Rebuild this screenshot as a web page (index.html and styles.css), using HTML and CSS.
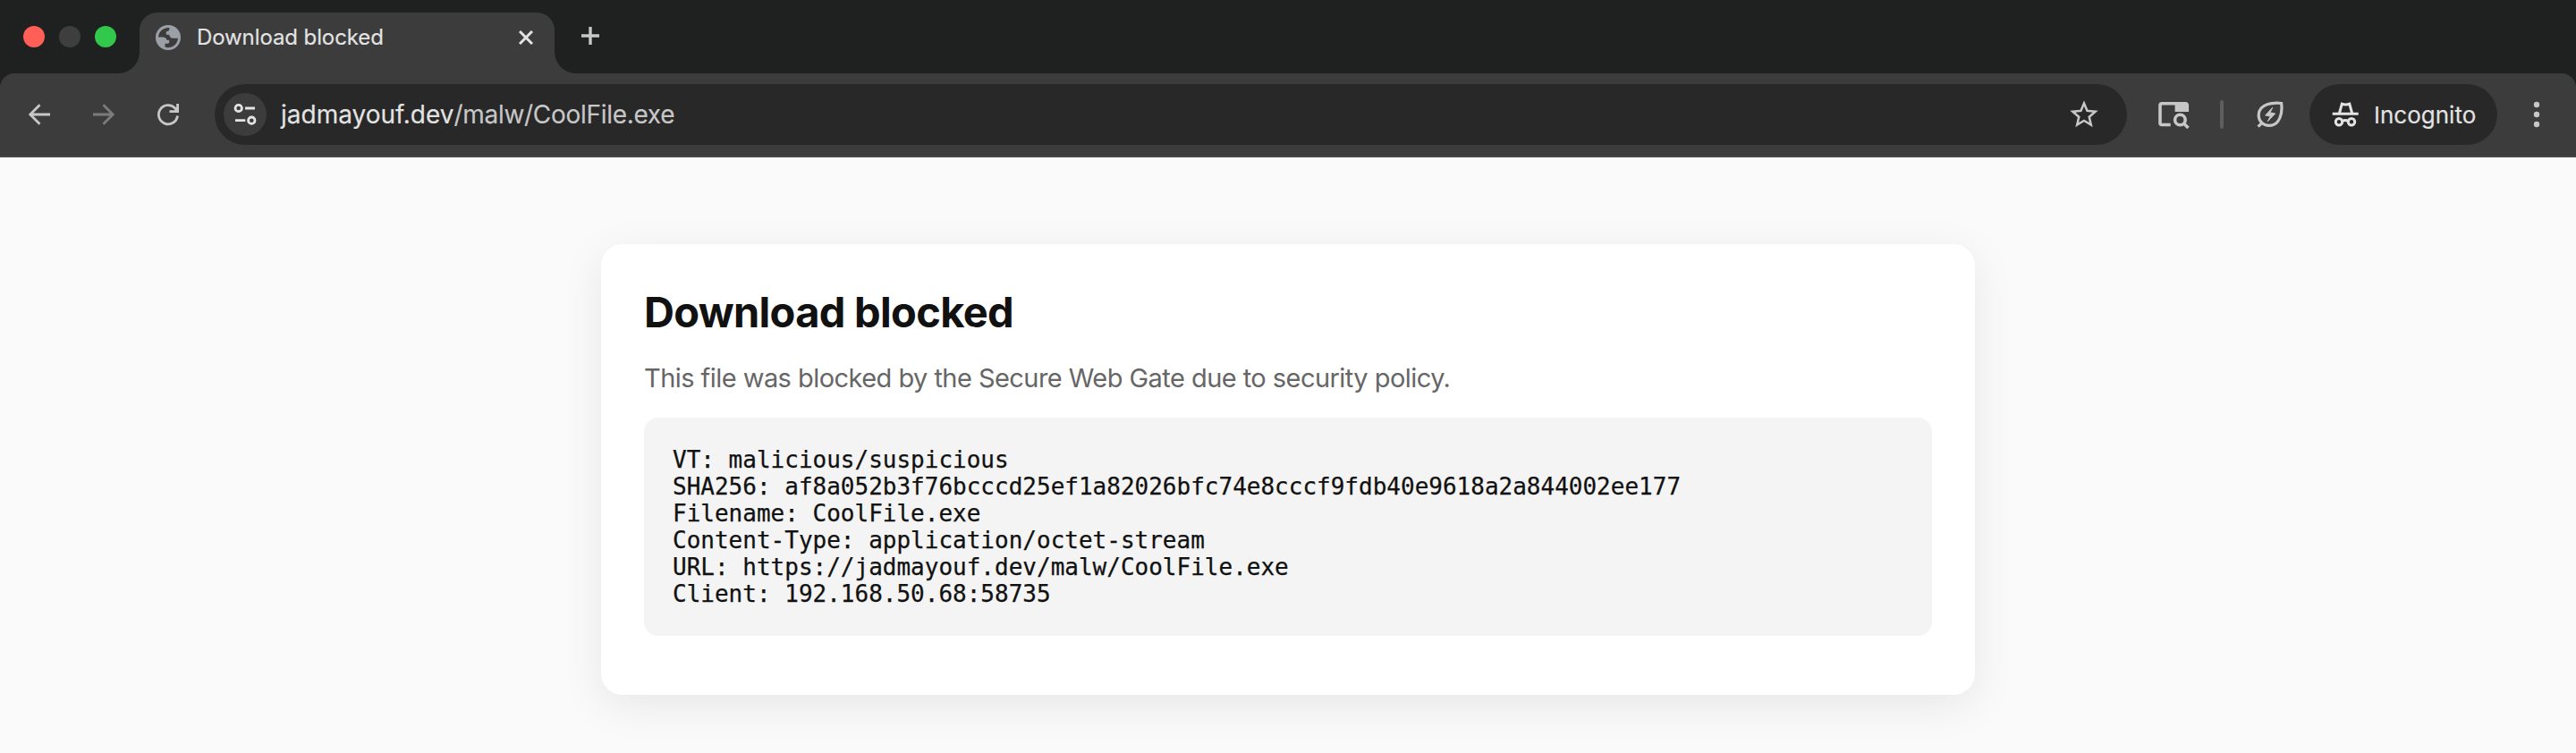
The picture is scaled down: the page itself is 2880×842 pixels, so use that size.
FILE: index.html
```html
<!DOCTYPE html>
<html lang="en">
<head>
<meta charset="utf-8">
<title>Download blocked</title>
<link rel="stylesheet" href="styles.css">
</head>
<body>
<header class="browser">
  <div class="tabstrip">
    <div class="lights"><i class="light red"></i><i class="light dim"></i><i class="light green"></i></div>
    <div class="tab">
      <svg class="favicon" viewBox="0 0 28 28"><circle cx="14" cy="14" r="14" fill="#9aa0a6"/><path fill="#3c3c3c" d="M3 13.5A11 11 0 0 1 15.5 3.2C15.5 6 14.5 7 11.8 7.2V10.8H15C15.8 13 16.8 14.8 19 14.8H25A11 11 0 0 1 10.5 24.6V20.8H13.2C15 20.8 15.3 19.5 15.3 18C15.3 16.5 14 16.8 12.5 16.8C12 14.5 10 13.6 8 13.6Z"/></svg>
      <span class="tab-title">Download blocked</span>
      <svg class="close" viewBox="0 0 16 16"><path d="M1 1l14 14M15 1L1 15" stroke="#e3e3e3" stroke-width="3"/></svg>
    </div>
    <svg class="plus" viewBox="0 0 20 20"><path d="M10 0v20M0 10h20" stroke="#c7c7c7" stroke-width="3.4"/></svg>
  </div>
  <div class="toolbar">
    <svg class="icon" viewBox="0 0 40 40"><path d="M32 20H10M20.5 9.3L9.8 20l10.7 10.7"/></svg>
    <svg class="icon faded" viewBox="0 0 40 40"><path d="M8 20h22M19.5 9.3L30.2 20 19.5 30.7"/></svg>
    <svg class="icon" viewBox="0 0 40 40"><path d="M30.5 21.5A10.6 10.6 0 1 1 27.8 13L30.4 16.6M30.6 8v8.6H21.5"/></svg>
    <div class="omnibox">
      <span class="site"><svg viewBox="0 0 48 48"><circle cx="16.7" cy="17" r="3.7"/><path d="M24 17h11M13 30.7h11.3"/><circle cx="31.3" cy="30.7" r="3.7"/></svg></span>
      <span class="url"><span class="host">jadmayouf.dev</span>/malw/CoolFile.exe</span>
      <svg class="icon solid" viewBox="0 0 40 40"><path transform="translate(1.15 1.2) scale(1.57)" d="M22 9.24l-7.19-.62L12 2 9.19 8.63 2 9.24l5.46 4.73L5.82 21 12 17.27 18.18 21l-1.63-7.03L22 9.24zM12 15.4l-3.76 2.27 1-4.28-3.32-2.88 4.38-.38L12 6.1l1.71 4.04 4.38.38-3.32 2.88 1 4.28L12 15.4z"/></svg>
    </div>
    <svg class="icon lens" viewBox="0 0 40 40"><path d="M16.7 31.5H7a2 2 0 0 1-2-2V9.7a2 2 0 0 1 2-2H33.3a2 2 0 0 1 2 2V15.2H23.4V8"/><path class="block" d="M22 7h14v9.5H22z"/><circle cx="27.4" cy="26" r="5.8"/><path d="M31.5 30l5 5"/></svg>
    <i class="divider"></i>
    <svg class="icon leaf" viewBox="0 0 40 40"><path d="M32.6 7.5C24 6.6 7.5 7.5 7.2 20.5C7 27 12 32.4 19 32.4C31.5 32.4 34 17 32.6 7.5ZM6.6 33.6L11 29.3"/><path class="bolt" d="M22.7 12.3L14.7 21L20.3 22L17.3 27.7L25.7 19L20 18Z"/></svg>
    <div class="incognito">
      <svg viewBox="0 0 32 32"><path d="M1.7 15.3h29M9.5 14.5L12.3 4.2Q16.5 6 20.8 4.2L23.6 14.5M12.7 23.5Q16 21.5 19.3 23.5"/><circle cx="9" cy="24.2" r="3.7"/><circle cx="23" cy="24.2" r="3.7"/></svg>
      <span class="profile">Incognito</span>
    </div>
    <svg class="icon dots" viewBox="0 0 40 40"><circle cx="20" cy="9" r="3.2"/><circle cx="20" cy="20" r="3.2"/><circle cx="20" cy="31" r="3.2"/></svg>
  </div>
</header>
<main class="page">
  <section class="card">
    <h1 class="heading">Download blocked</h1>
    <p class="message">This file was blocked by the Secure Web Gate due to security policy.</p>
    <pre class="details">VT: malicious/suspicious
SHA256: af8a052b3f76bcccd25ef1a82026bfc74e8cccf9fdb40e9618a2a844002ee177
Filename: CoolFile.exe
Content-Type: application/octet-stream
URL: https://jadmayouf.dev/malw/CoolFile.exe
Client: 192.168.50.68:58735</pre>
  </section>
</main>
</body>
</html>
```
FILE: styles.css
```css
* { box-sizing: border-box; }
body {
  margin: 0;
  height: 842px;
  overflow: hidden;
  display: flex;
  flex-direction: column;
  background: #fafafa;
  color: #111;
  font-family: Inter, "Liberation Sans", sans-serif;
}
svg { display: block; flex: none; }
.browser { background: #1f2120; -webkit-text-stroke: 0.15px; }
.tabstrip { display: flex; height: 82px; padding-left: 26px; }
.lights { display: flex; gap: 16px; width: 130px; padding-top: 29px; }
.light { width: 24px; height: 24px; border-radius: 50%; }
.red { background: #ff5f57; }
.dim { background: #3e3e3e; }
.green { background: #32c84b; }
.tab {
  position: relative;
  display: flex;
  width: 464px;
  height: 68px;
  margin-top: 14px;
  padding: 0 24px 12px 18px;
  align-items: center;
  border-radius: 20px 20px 0 0;
  background: #3c3c3c;
}
.tab::before, .tab::after {
  content: "";
  position: absolute;
  bottom: 0;
  width: 24px;
  height: 24px;
}
.tab::before { left: -24px; background: radial-gradient(circle at 0 0, transparent 23.5px, #3c3c3c 24.5px); }
.tab::after { right: -24px; background: radial-gradient(circle at 100% 0, transparent 23.5px, #3c3c3c 24.5px); }
.favicon { width: 28px; height: 28px; }
.tab-title { flex: 1; margin-left: 18px; color: #e3e3e3; font-size: 24px; letter-spacing: -0.1px; line-height: 30px; white-space: nowrap; }
.close { width: 16px; height: 16px; }
.plus { width: 20px; height: 20px; margin: 30px 0 0 30px; }
.toolbar {
  display: flex;
  align-items: center;
  gap: 32px;
  height: 94px;
  padding: 0 24px;
  border-bottom: 2px solid #484546;
  border-radius: 16px 16px 0 0;
  background: #3c3c3c;
}
.icon { width: 40px; height: 40px; fill: none; stroke: #c7c7c7; stroke-width: 2.8; }
.faded { stroke: #7c7c7c; }
.solid, .dots { fill: #c7c7c7; stroke: none; }
.lens { stroke-width: 3.6; }
.lens .block { fill: #c7c7c7; stroke: none; }
.leaf { stroke-width: 3.2; }
.leaf .bolt { fill: #c7c7c7; stroke-width: 1; }
.omnibox {
  display: flex;
  flex: 1;
  align-items: center;
  height: 68px;
  padding: 0 28px 0 10px;
  border-radius: 34px;
  background: #282828;
}
.site { border-radius: 50%; background: #3c3c3c; }
.site svg { width: 48px; height: 48px; fill: none; stroke: #e3e3e3; stroke-width: 2.8; }
.url { flex: 1; margin-left: 16px; color: #c7c7c7; font-size: 28px; letter-spacing: -0.3px; line-height: 34px; white-space: nowrap; }
.host { color: #e3e3e3; letter-spacing: 0; }
.divider { width: 4px; height: 32px; border-radius: 2px; background: #5e5e5e; }
.incognito {
  display: flex;
  align-items: center;
  gap: 16px;
  width: 210px;
  height: 68px;
  margin: 0 -8px;
  padding-left: 24px;
  border-radius: 34px;
  background: #282828;
  color: #e3e3e3;
  font-size: 26px;
  line-height: 34px;
}
.profile { padding-top: 2px; }
.incognito svg { width: 32px; height: 32px; fill: none; stroke: #e3e3e3; stroke-width: 3; }
.page { flex: 1; padding-top: 97px; }
.card {
  width: 1536px;
  height: 504px;
  margin: 0 auto;
  padding: 48px;
  border-radius: 24px;
  background: #fff;
  box-shadow: 0 12px 48px rgba(0, 0, 0, 0.08);
}
.heading { margin: 0; font-size: 47px; letter-spacing: -0.7px; line-height: 56px; font-weight: 700; white-space: nowrap; }
.message { margin: 27px 0 25px; color: #666; font-size: 29px; letter-spacing: -0.55px; line-height: 38px; white-space: nowrap; }
.details {
  height: 244px;
  margin: 0;
  padding: 32px;
  border-radius: 16px;
  background: #f4f4f4;
  font-family: "DejaVu Sans Mono", "Liberation Mono", monospace;
  font-size: 26px;
  line-height: 30px;
  -webkit-text-stroke: 0.25px;
}
```
